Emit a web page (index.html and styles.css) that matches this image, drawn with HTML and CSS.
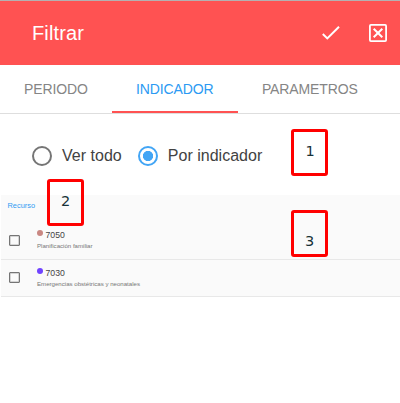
FILE: index.html
```html
<!DOCTYPE html>
<html lang="es">
<head>
<meta charset="utf-8">
<title>Filtrar</title>
<link rel="stylesheet" href="styles.css">
</head>
<body>
<header class="toolbar">
  <h1 class="title">Filtrar</h1>
  <svg class="icon-check" width="24" height="24" viewBox="0 0 24 24"><path d="M3.8 13 L8.3 17.4 L20 5.8" fill="none" stroke="#fff" stroke-width="2"/></svg>
  <svg class="icon-close" width="18" height="18" viewBox="0 0 18 18" fill="none" stroke="#fff"><rect x=".9" y=".9" width="16.2" height="16.2" rx="1" stroke-width="1.8"/><path d="M4.7 4.7l8.6 8.6M13.3 4.7l-8.6 8.6" stroke-width="2"/></svg>
</header>
<nav class="tabs">
  <span class="tab">PERIODO</span>
  <span class="tab active">INDICADOR</span>
  <span class="tab">PARAMETROS</span>
</nav>
<section class="options">
  <span class="radio"></span><span class="radio-label">Ver todo</span>
  <span class="radio checked"></span><span class="radio-label">Por indicador</span>
</section>
<main class="list">
  <div class="list-head">Recurso</div>
  <div class="row">
    <span class="box"></span>
    <div class="info">
      <div class="code"><i class="dot"></i>7050</div>
      <div class="desc">Planificación familiar</div>
    </div>
  </div>
  <div class="row">
    <span class="box"></span>
    <div class="info">
      <div class="code"><i class="dot violet"></i>7030</div>
      <div class="desc">Emergencias obstétricas y neonatales</div>
    </div>
  </div>
</main>
<div class="note note-1">1</div>
<div class="note note-2">2</div>
<div class="note note-3">3</div>
</body>
</html>
```
FILE: styles.css
```css
* { box-sizing: border-box; }
body {
  position: relative;
  margin: 0;
  height: 403px;
  overflow: hidden;
  background: #fff;
  font-family: "Liberation Sans", Arial, sans-serif;
}
.toolbar {
  display: flex;
  align-items: center;
  height: 65px;
  padding: 0 13px 0 32px;
  border-top: 1px solid #b5b0b1;
  background: #ff5252;
  color: #fff;
}
.title { flex: 1; margin: 0; font-size: 20px; font-weight: 400; line-height: 24px; letter-spacing: 0.12px; }
.icon-check { margin: 0 26px 0 0; }
.tabs {
  display: flex;
  height: 49px;
  border-bottom: 1px solid #dedede;
  color: #858585;
  font-size: 14px;
  line-height: 48px;
}
.tab { padding: 0 24px; letter-spacing: -0.1px; }
.tab.active { width: 126px; border-bottom: 2px solid #ff5252; color: #2b9af3; }
.options {
  display: flex;
  align-items: center;
  height: 81px;
  padding: 3px 0 0 32px;
  color: #424242;
  font-size: 16px;
}
.radio { width: 20px; height: 20px; border: 2px solid #757575; border-radius: 50%; }
.radio.checked {
  border-color: #42a5f5;
  background: radial-gradient(circle, #42a5f5 4.8px, transparent 5.4px);
}
.radio-label { margin: 0 16px 0 10px; letter-spacing: 0.02px; }
.list { margin-left: 1px; background: #fafafa; color: #666; }
.list-head { height: 27px; padding-left: 6.5px; color: #2f9bf3; font-size: 7.4px; line-height: 22px; }
.row {
  display: flex;
  align-items: center;
  height: 37.5px;
  padding: 0 0 0 8px;
  border-bottom: 1px solid #e8e8e8;
}
.box {
  width: 11px;
  height: 11px;
  border: 1px solid #757575;
  border-radius: 1px;
  box-shadow: inset 0 0 0 0.5px #b0b0b0;
}
.info { margin-left: 17px; }
.code { display: flex; height: 12px; font-size: 8.7px; line-height: 13px; color: #444; }
.dot { width: 6px; height: 6px; margin: 1px 2.5px 0 0; border-radius: 50%; background: #c98782; }
.dot.violet { background: #7043ff; }
.desc { height: 10px; font-size: 6.1px; line-height: 10px; color: #777; }
.note {
  position: absolute;
  width: 37px;
  height: 47px;
  border: 3px solid #f00;
  border-radius: 3px;
  color: #173238;
  font: 14.5px/20px "DejaVu Sans", sans-serif;
  text-align: center;
}
.note-1 { left: 291px; top: 129px; padding: 9px 0 0 1px; }
.note-2 { left: 47px; top: 179px; padding-top: 9px; }
.note-3 { left: 291px; top: 210px; padding-top: 18px; }
```
